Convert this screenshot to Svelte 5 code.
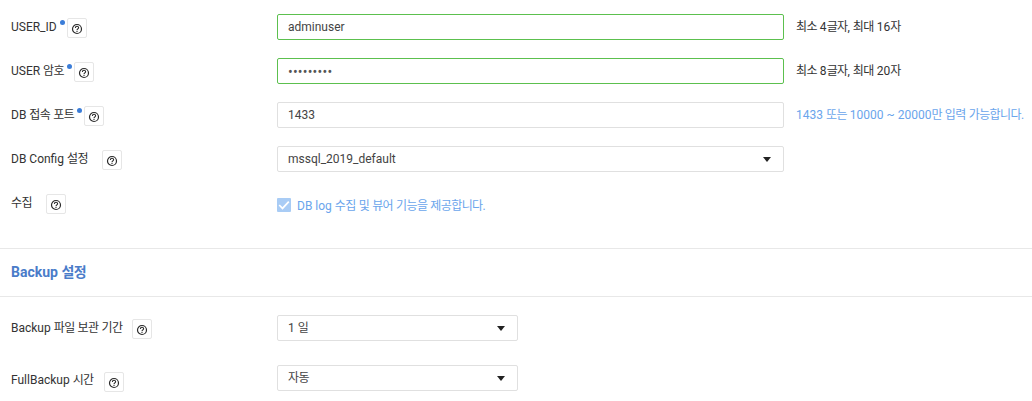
<script>
  // Hangul runs sit slightly tighter than the Latin text around them.
  const runs = (text) =>
    text.split(/([\uAC00-\uD7A3]+)/).filter(Boolean).map((s) => ({ s, ko: /[\uAC00-\uD7A3]/.test(s) }));
</script>

{#snippet t(text)}{#each runs(text) as r}{#if r.ko}<span class="ko">{r.s}</span>{:else}{r.s}{/if}{/each}{/snippet}

{#snippet q()}
  <span class="help">
    <svg width="12" height="12" viewBox="0 0 12 12" fill="none" stroke="#2b2b2b" aria-hidden="true">
      <circle cx="6" cy="6" r="4.5" stroke-width="1.2" />
      <path d="M4.4 4.9c0-2.1 3.2-2.1 3.2-.1 0 1-1.6 1.1-1.6 2.4" stroke-width="1.1" />
      <path d="M6 8v1" stroke-width="1.1" />
    </svg>
  </span>
{/snippet}

{#snippet caret()}
  <svg class="caret" width="8" height="5" viewBox="0 0 8 5" aria-hidden="true"><path d="M0 0h8L4 5z" fill="#222" /></svg>
{/snippet}

<div class="page">
  <section class="top">
    <div class="row">
      <div class="label"><span>USER_ID</span><i class="dot"></i><span class="hb">{@render q()}</span></div>
      <div class="field ok">adminuser</div>
      <div class="hint">{@render t('최소 4글자, 최대 16자')}</div>
    </div>
    <div class="row">
      <div class="label"><span>{@render t('USER 암호')}</span><i class="dot"></i><span class="hb">{@render q()}</span></div>
      <div class="field ok pw">•••••••••</div>
      <div class="hint">{@render t('최소 8글자, 최대 20자')}</div>
    </div>
    <div class="row">
      <div class="label"><span>{@render t('DB 접속 포트')}</span><i class="dot"></i><span class="hb">{@render q()}</span></div>
      <div class="field">1433</div>
      <div class="hint blue">{@render t('1433 또는 10000 ~ 20000만 입력 가능합니다.')}</div>
    </div>
    <div class="row">
      <div class="label"><span>{@render t('DB Config 설정')}</span><span class="hb wide">{@render q()}</span></div>
      <div class="field sel"><span>mssql_2019_default</span>{@render caret()}</div>
    </div>
    <div class="row check">
      <div class="label"><span>{@render t('수집')}</span><span class="hb wide">{@render q()}</span></div>
      <div class="cb">
        <span class="box">
          <svg width="14" height="14" viewBox="0 0 14 14" fill="none" aria-hidden="true"><path d="M2.2 7l3.3 3.4 6.3-6.8" stroke="#fff" stroke-width="1.7" /></svg>
        </span>
        <span class="cbt">{@render t('DB log 수집 및 뷰어 기능을 제공합니다.')}</span>
      </div>
    </div>
  </section>

  <h2>{@render t('Backup 설정')}</h2>

  <section class="bottom">
    <div class="row b1">
      <div class="label"><span>{@render t('Backup 파일 보관 기간')}</span><span class="hb mid">{@render q()}</span></div>
      <div class="field sel short"><span>{@render t('1 일')}</span>{@render caret()}</div>
    </div>
    <div class="row b2">
      <div class="label low"><span>{@render t('FullBackup 시간')}</span><span class="hb mid">{@render q()}</span></div>
      <div class="field sel short"><span>{@render t('자동')}</span>{@render caret()}</div>
    </div>
  </section>
</div>

<style>
  :global(body) {
    margin: 0;
    background: #fff;
  }
  .page {
    width: 1032px;
    height: 401px;
    overflow: hidden;
    font-family: Roboto, "Noto Sans CJK KR", sans-serif;
    font-size: 12px;
    color: #333;
    box-sizing: border-box;
  }
  .ko {
    letter-spacing: -0.6px;
  }
  .top {
    padding: 14px 0 0;
    height: 234px;
    box-sizing: content-box;
    border-bottom: 1px solid #e8e8e8;
  }
  .row {
    display: flex;
    align-items: flex-start;
    height: 26px;
    margin-bottom: 18px;
  }
  .label {
    width: 277px;
    flex: none;
    padding-left: 11px;
    box-sizing: border-box;
    display: flex;
    align-items: flex-start;
    line-height: 26px;
  }
  .label.low {
    padding-top: 2px;
  }
  .dot {
    width: 5px;
    height: 5px;
    border-radius: 50%;
    background: #3b7dd8;
    margin: 6px 0 0 3px;
    flex: none;
  }
  .hb {
    display: block;
    margin: 4px 0 0 2px;
  }
  .hb.wide {
    margin-left: 14px;
  }
  .hb.mid {
    margin-left: 10px;
  }
  .low .hb {
    margin-top: 5px;
  }
  .help {
    display: flex;
    align-items: center;
    justify-content: center;
    width: 20px;
    height: 20px;
    box-sizing: border-box;
    border: 1px solid #e6e6e6;
    border-radius: 2px;
    background: #fff;
    padding-top: 1px;
  }
  .field {
    box-sizing: border-box;
    width: 507px;
    height: 26px;
    border: 1px solid #e0e0e0;
    border-radius: 2px;
    padding: 0 10px;
    line-height: 24px;
    color: #444;
    flex: none;
  }
  .field.ok {
    border-color: #5cc04e;
  }
  .pw {
    font-size: 14px;
    letter-spacing: 0.2px;
    line-height: 26px;
    color: #555;
  }
  .sel {
    display: flex;
    align-items: center;
    justify-content: space-between;
    padding-right: 12px;
  }
  .caret {
    flex: none;
  }
  .short {
    width: 241px;
  }
  .hint {
    margin-left: 12px;
    line-height: 26px;
    white-space: nowrap;
  }
  .hint.blue,
  .cbt {
    color: #6aa5ec;
  }
  .cb {
    display: flex;
    align-items: center;
    height: 30px;
  }
  .box {
    width: 14px;
    height: 14px;
    background: #a9ccf5;
    border-radius: 1px;
    display: flex;
    align-items: center;
    justify-content: center;
    overflow: hidden;
  }
  .cbt {
    margin-left: 6px;
    margin-top: -2px;
  }
  h2 {
    margin: 0;
    height: 47px;
    line-height: 47px;
    padding-left: 11px;
    font-size: 14px;
    font-weight: 700;
    color: #4a7cc9;
    border-bottom: 1px solid #e8e8e8;
    box-sizing: content-box;
  }
  .bottom {
    padding-top: 18px;
  }
  .b1 {
    margin-bottom: 24px;
  }
</style>
